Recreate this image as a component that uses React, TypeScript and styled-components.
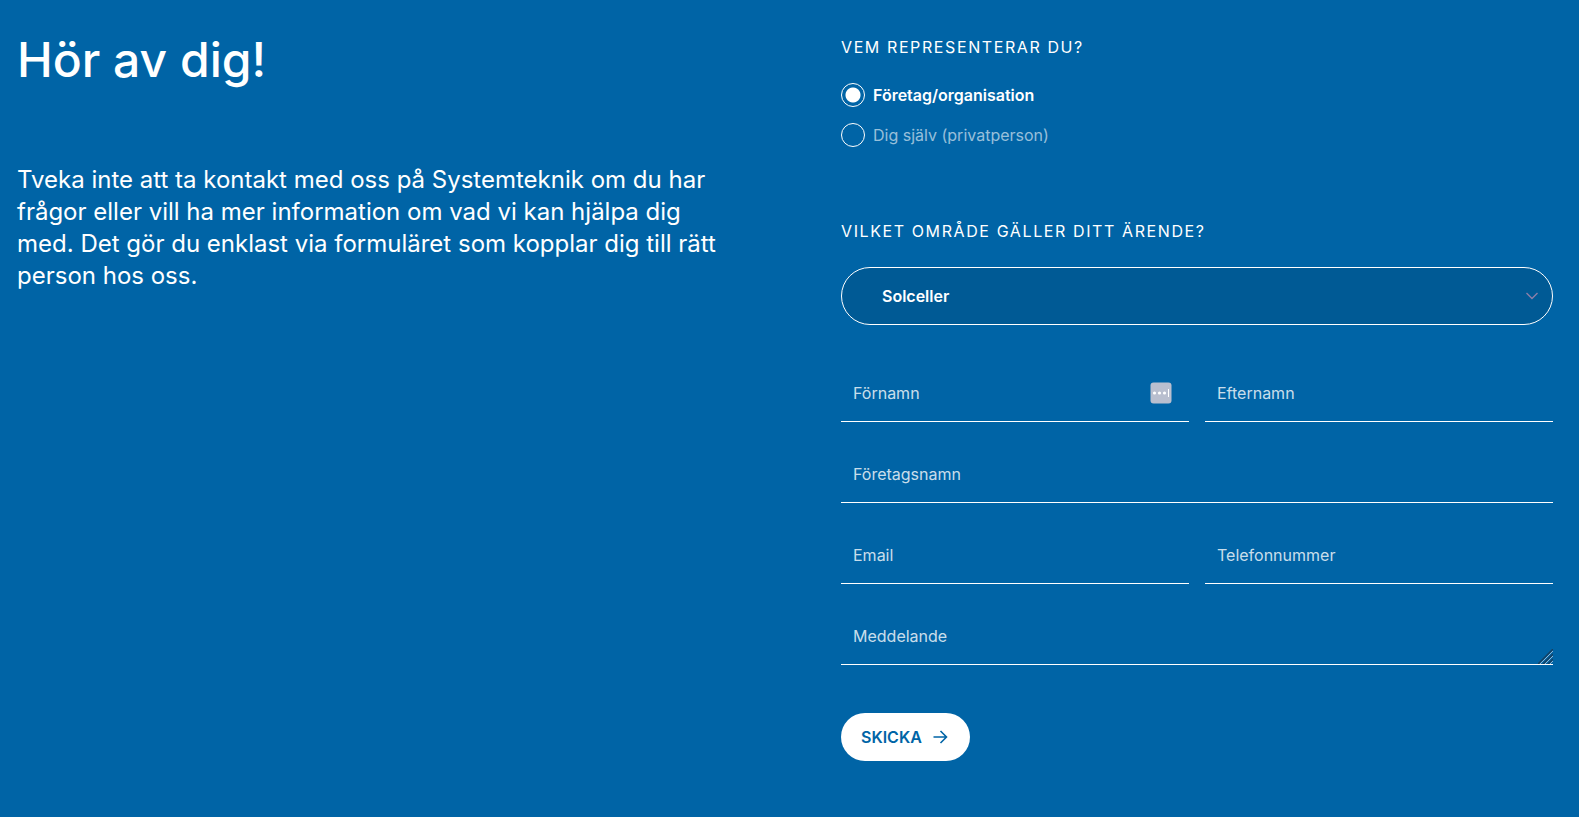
import React from "react";
import styled, { createGlobalStyle } from "styled-components";

const Global = createGlobalStyle`
  *, *::before, *::after { box-sizing: border-box; }
  body { margin: 0; background: #0064a6; color: #fff; font-family: Inter, "Liberation Sans", sans-serif; font-size: 16px; line-height: 24px; }
  input, select, textarea, button { font: inherit; color: inherit; }
`;

const Page = styled.main`
  display: grid;
  grid-template-columns: minmax(0, 1fr) minmax(0, 1fr);
  column-gap: 112px;
  padding: 32px 26px 56px 17px;
`;

const Title = styled.h1`
  margin: 0;
  font-size: 48px;
  line-height: 56px;
  font-weight: 500;
`;

const Lead = styled.p`
  margin: 76px 0 0;
  font-size: 24px;
  line-height: 32px;
`;

const Form = styled.form`
  display: flex;
  flex-direction: column;
`;

const Group = styled.fieldset`
  margin: 0 0 60px;
  padding: 0;
  border: 0;
  min-width: 0;
`;

const captionText = `
  display: block;
  letter-spacing: 0.1em;
  text-transform: uppercase;
`;

const Legend = styled.legend`
  ${captionText}
  padding: 3px 0 0;
  margin-bottom: 16px;
`;

const Caption = styled.label`
  ${captionText}
  padding: 4px 0 0;
  margin-bottom: 24px;
`;

const Option = styled.label`
  display: flex;
  align-items: center;
  gap: 8px;
  height: 40px;
  color: rgba(255, 255, 255, 0.6);
  &:has(input:checked) { color: #fff; font-weight: 600; }
`;

const Radio = styled.input`
  appearance: none;
  width: 24px;
  height: 24px;
  margin: 0;
  border: 1px solid #fff;
  border-radius: 50%;
  &:checked { background: radial-gradient(circle, #fff 7px, transparent 8px); }
`;

const SelectBox = styled.div`
  display: grid;
  align-items: center;
  margin-bottom: 40px;
  > * { grid-area: 1 / 1; }
  svg { justify-self: end; margin-right: 14px; pointer-events: none; }
`;

const Select = styled.select`
  appearance: none;
  width: 100%;
  height: 58px;
  padding: 0 40px;
  border: 1px solid #fff;
  border-radius: 29px;
  background: #005a95;
  font-weight: 600;
`;

const Fields = styled.div`
  display: grid;
  grid-template-columns: minmax(0, 1fr) minmax(0, 1fr);
  gap: 24px 16px;
`;

const Field = styled.div<{ $wide?: boolean }>`
  display: grid;
  align-items: center;
  grid-column: ${(p) => (p.$wide ? "1 / -1" : "auto")};
  > * { grid-area: 1 / 1; }
`;

const FillBadge = styled.svg`
  justify-self: end;
  margin: 0 17px 2px 0;
`;

const Grip = styled.svg`
  place-self: end;
  margin-bottom: 1px;
  pointer-events: none;
`;

const control = `
  display: block;
  width: 100%;
  height: 57px;
  margin: 0;
  padding: 16px 12px;
  border: 0;
  border-bottom: 1px solid #fff;
  border-radius: 0;
  background: transparent;
  outline-offset: 2px;
  &::placeholder { color: rgba(255, 255, 255, 0.8); opacity: 1; }
`;

const Input = styled.input`${control}`;
const TextArea = styled.textarea`
  ${control}
  resize: vertical;
  overflow: hidden;
  &::-webkit-resizer { background: transparent; }
`;

const Submit = styled.button`
  display: inline-flex;
  align-items: center;
  align-self: flex-start;
  gap: 8px;
  height: 48px;
  margin-top: 48px;
  padding: 0 20px;
  border: 0;
  border-radius: 24px;
  background: #fff;
  color: #0064a6;
  font-weight: 600;
`;

export default function App() {
  return (
    <>
      <Global />
      <Page>
        <section>
          <Title>Hör av dig!</Title>
          <Lead>
            Tveka inte att ta kontakt med oss på Systemteknik om du har frågor eller vill ha mer
            information om vad vi kan hjälpa dig med. Det gör du enklast via formuläret som kopplar
            dig till rätt person hos oss.
          </Lead>
        </section>
        <Form onSubmit={(e) => e.preventDefault()}>
          <Group>
            <Legend>Vem representerar du?</Legend>
            <Option>
              <Radio type="radio" name="kind" defaultChecked />
              Företag/organisation
            </Option>
            <Option>
              <Radio type="radio" name="kind" />
              Dig själv (privatperson)
            </Option>
          </Group>
          <Caption htmlFor="area">Vilket område gäller ditt ärende?</Caption>
          <SelectBox>
            <Select id="area" defaultValue="Solceller">
              <option>Solceller</option>
            </Select>
            <svg width="14" height="14" viewBox="0 0 14 14" fill="none" stroke="#8c7fa8" strokeWidth="1.4" aria-hidden="true">
              <path d="M1.5 4 7 9.500l5.500-5.500" />
            </svg>
          </SelectBox>
          <Fields>
            <Field>
              <Input aria-label="Förnamn" placeholder="Förnamn" />
              <FillBadge width="22" height="22" viewBox="0 0 22 22" aria-hidden="true">
                <rect x="0.500" y="0.500" width="21" height="21" rx="3" fill="#b9bfcf" />
                <g fill="#fff">
                  <circle cx="4.500" cy="11" r="1.600" />
                  <circle cx="9.500" cy="11" r="1.600" />
                  <circle cx="14.500" cy="11" r="1.600" />
                  <rect x="18" y="7" width="1" height="8" />
                </g>
              </FillBadge>
            </Field>
            <Field><Input aria-label="Efternamn" placeholder="Efternamn" /></Field>
            <Field $wide><Input aria-label="Företagsnamn" placeholder="Företagsnamn" /></Field>
            <Field><Input type="email" aria-label="Email" placeholder="Email" /></Field>
            <Field><Input type="tel" aria-label="Telefonnummer" placeholder="Telefonnummer" /></Field>
            <Field $wide>
              <TextArea aria-label="Meddelande" placeholder="Meddelande" />
              <Grip width="15" height="15" viewBox="0 0 15 15" fill="none" aria-hidden="true">
                <path d="M0 15 15 0M5 15 15 5M10 15l5-5" stroke="#173f5e" strokeWidth="1.300" />
                <path d="M2 15 15 2M7 15l8-8M12 15l3-3" stroke="#8fb5d2" strokeWidth="1" />
              </Grip>
            </Field>
          </Fields>
          <Submit type="submit">
            SKICKA
            <svg width="20" height="20" viewBox="0 0 20 20" fill="none" stroke="currentColor" strokeWidth="1.600" aria-hidden="true">
              <path d="M3.500 10h13M10.500 4l6 6-6 6" />
            </svg>
          </Submit>
        </Form>
      </Page>
    </>
  );
}
